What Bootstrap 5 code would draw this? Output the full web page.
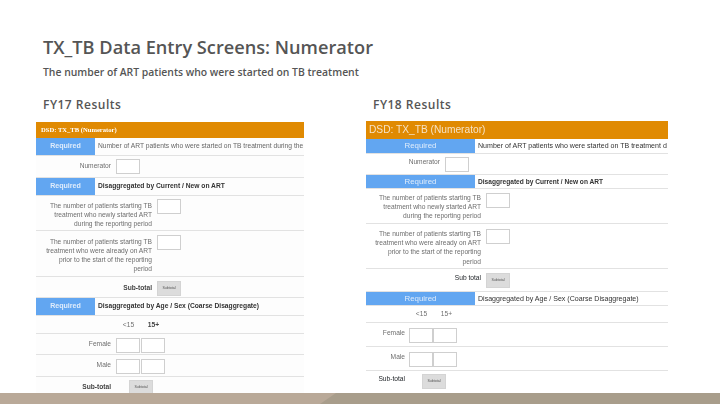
<!DOCTYPE html>
<html lang="en">
<head>
<meta charset="utf-8">
<title>TX_TB Data Entry Screens</title>
<link href="https://cdn.jsdelivr.net/npm/bootstrap@5.3.0/dist/css/bootstrap.min.css" rel="stylesheet">
<style>
html,body{height:405px;overflow:hidden;background:#fff}
.slide{height:405px}
.slide-head{padding:36px 0 0 43px;color:#555;font-family:"Open Sans","Liberation Sans",sans-serif}
.slide-title{font-size:18.2px;font-weight:600;line-height:22px;margin:0}
.slide-sub{font-size:10.4px;font-weight:600;line-height:14px;margin:7px 0 0}
.col-heads{margin-top:18px;height:24px}
.col-head{font-size:12px;font-weight:600;line-height:16px;margin:0;width:330px;letter-spacing:.5px}
.shots{min-height:0}
.shot{font-family:"Liberation Sans",sans-serif;color:#6e6e6e;font-size:6.65px;line-height:9.1px;filter:blur(.35px);overflow:hidden;white-space:nowrap}
.shot-a{width:268px;margin-left:36px;margin-top:1px;background:#fdfdfd}
.shot-b{width:302px;margin-left:62px;background:#fff}
.dsd{background:#e08a02;color:#fff}
.shot-a .dsd{height:16px;font:700 6.6px/15px "Liberation Serif",serif;padding-left:5px}
.shot-b .dsd{height:18px;font-size:10.2px;line-height:18px;padding-left:3px;color:#f6e2c4}
.rw{border-bottom:1px solid #e2e2e2}
.req{background:#62a6f1;color:#dfecfb;text-align:center;flex:none;align-self:stretch}
.shot-a .req{width:59px;line-height:17px;font-size:7.1px;font-weight:700}
.shot-b .req{width:109px;font-size:7.9px;line-height:14px}
.sec{padding-left:3px}
.shot-a .sec{line-height:16px;font-size:6.7px;color:#666}
.shot-b .sec{line-height:13px;color:#333;font-size:7.05px}
.shot-a .sec.strong{font-size:6.7px;color:#333}
.shot-b .sec.strong{font-size:6.6px}
.strong{font-weight:700;color:#444}
.lab{text-align:right;flex:none}
.shot-a .lab{padding-top:1.5px}
.shot-b .lab{padding-top:.3px}
.shot-a .lab.lift{padding-top:.5px}
.entry{flex:none;display:block;background:#fff;border:1px solid #cfcfcf;width:24px;height:15px;padding:0}
.calc{flex:none;display:block;background:#dcdcdc;border:1px solid #d4d4d4;border-radius:0;width:24px;height:15px;padding:0;font-size:3.6px;line-height:13px;color:#555;text-align:center}
.ages{text-align:center;flex:none;width:25px}
.gp{gap:5px}.gp-s{gap:4px}
.tight{gap:1px}.none{gap:0}
.shot-a .l1{width:75px}.shot-a .l2{width:116px}
.shot-b .l1{width:74px}.shot-b .l2{width:115px}.shot-b .l0{width:39px}
.pd3{padding-top:3px}.pd4{padding-top:4px}.pd5{padding-top:5px}
.shot-a .h-req{height:18px}.shot-a .h-num{height:22px}.shot-a .h-long{height:35px}.shot-a .h-longer{height:46px}
.shot-a .h-sub{height:21px}.shot-a .h-age{height:18px}.shot-a .h-f{height:21px}.shot-a .h-m{height:22px}.shot-a .h-s2{height:16px}
.shot-b .h-req{height:14px}.shot-b .h-req1{height:15px}.shot-b .h-num{height:21px}.shot-b .h-long{height:35px}.shot-b .h-longer{height:45px}
.shot-b .h-sub{height:23px}.shot-b .h-age{height:17px}.shot-b .h-f{height:24px}.shot-b .h-m{height:24px}.shot-b .h-s2{height:22px}
.ml-a{margin-left:18px}
.ml-b{margin-left:17px}
.a-age{padding-left:80px}.b-age{padding-left:43px}
.foot{height:11px;margin-bottom:1px;flex:none;background:#a89d8b;overflow:hidden}
.foot-l{width:336px;height:100%;background:#b9a998;clip-path:polygon(0 0,100% 0,320px 100%,0 100%)}
</style>
</head>
<body>
<div class="slide d-flex flex-column">
  <header class="slide-head">
    <h1 class="slide-title">TX_TB Data Entry Screens: Numerator</h1>
    <p class="slide-sub">The number of ART patients who were started on TB treatment</p>
    <div class="d-flex col-heads">
      <h2 class="col-head">FY17 Results</h2>
      <h2 class="col-head">FY18 Results</h2>
    </div>
  </header>
  <main class="shots d-flex flex-grow-1 align-items-start">
    <section class="shot shot-a">
      <div class="dsd">DSD: TX_TB (Numerator)</div>
      <div class="rw h-req d-flex"><div class="req">Required</div><div class="sec">Number of ART patients who were started on TB treatment during the</div></div>
      <div class="rw h-num d-flex gp pd3"><div class="lab l1">Numerator</div><div class="entry"></div></div>
      <div class="rw h-req d-flex"><div class="req">Required</div><div class="sec strong">Disaggregated by Current / New on ART</div></div>
      <div class="rw h-long d-flex gp pd3"><div class="lab l2">The number of patients starting TB<br>treatment who newly started ART<br>during the reporting period</div><div class="entry"></div></div>
      <div class="rw h-longer d-flex gp pd4"><div class="lab l2">The number of patients starting TB<br>treatment who were already on ART<br>prior to the start of the reporting<br>period</div><div class="entry"></div></div>
      <div class="rw h-sub d-flex gp pd4"><div class="lab l2 strong">Sub-total</div><button class="calc" type="button">Subtotal</button></div>
      <div class="rw h-req d-flex"><div class="req">Required</div><div class="sec strong">Disaggregated by Age / Sex (Coarse Disaggregate)</div></div>
      <div class="rw h-age d-flex align-items-center a-age"><div class="ages">&lt;15</div><div class="ages strong">15+</div></div>
      <div class="rw h-f d-flex gp pd4"><div class="lab lift l1">Female</div><div class="d-flex tight"><div class="entry"></div><div class="entry"></div></div></div>
      <div class="rw h-m d-flex gp pd4"><div class="lab lift l1">Male</div><div class="d-flex tight"><div class="entry"></div><div class="entry"></div></div></div>
      <div class="h-s2 d-flex pd3"><div class="lab l1 strong">Sub-total</div><button class="calc ml-a" type="button">Subtotal</button></div>
    </section>
    <section class="shot shot-b">
      <div class="dsd">DSD: TX_TB (Numerator)</div>
      <div class="rw h-req1 d-flex"><div class="req">Required</div><div class="sec">Number of ART patients who were started on TB treatment d</div></div>
      <div class="rw h-num d-flex gp pd3"><div class="lab l1">Numerator</div><div class="entry"></div></div>
      <div class="rw h-req d-flex"><div class="req">Required</div><div class="sec strong">Disaggregated by Current / New on ART</div></div>
      <div class="rw h-long d-flex gp pd4"><div class="lab l2">The number of patients starting TB<br>treatment who newly started ART<br>during the reporting period</div><div class="entry"></div></div>
      <div class="rw h-longer d-flex gp pd5"><div class="lab l2">The number of patients starting TB<br>treatment who were already on ART<br>prior to the start of the reporting<br>period</div><div class="entry"></div></div>
      <div class="rw h-sub d-flex gp pd4"><div class="lab l2 text-dark">Sub total</div><button class="calc" type="button">Subtotal</button></div>
      <div class="rw h-req d-flex"><div class="req">Required</div><div class="sec">Disaggregated by Age / Sex (Coarse Disaggregate)</div></div>
      <div class="rw h-age d-flex align-items-center b-age"><div class="ages">&lt;15</div><div class="ages">15+</div></div>
      <div class="rw h-f d-flex gp-s pd5"><div class="lab l0">Female</div><div class="d-flex none"><div class="entry"></div><div class="entry"></div></div></div>
      <div class="rw h-m d-flex gp-s pd5"><div class="lab l0">Male</div><div class="d-flex none"><div class="entry"></div><div class="entry"></div></div></div>
      <div class="h-s2 d-flex pd3"><div class="lab l0 text-dark">Sub-total</div><button class="calc ml-b" type="button">Subtotal</button></div>
    </section>
  </main>
  <footer class="foot"><div class="foot-l"></div></footer>
</div>
<script src="https://cdn.jsdelivr.net/npm/bootstrap@5.3.0/dist/js/bootstrap.bundle.min.js"></script>
</body>
</html>
